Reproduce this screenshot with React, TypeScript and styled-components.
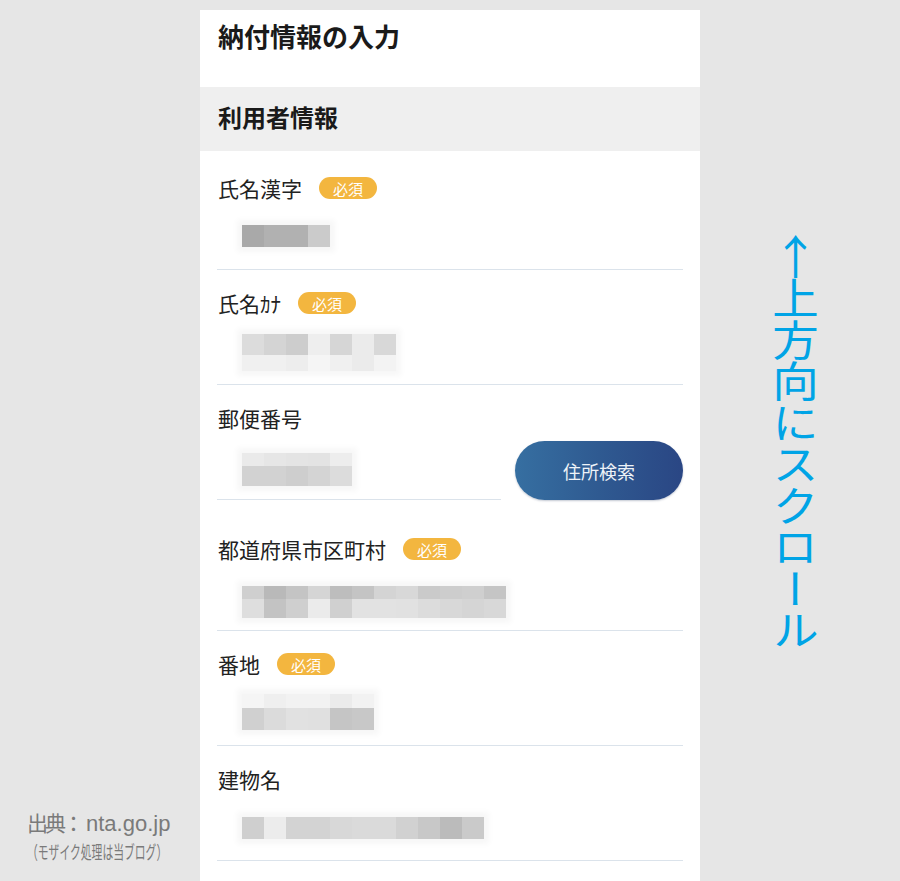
import React from "react";
import styled, { createGlobalStyle } from "styled-components";

const GlobalStyle = createGlobalStyle`
  html, body { margin: 0; padding: 0; background: #e6e6e6; }
  body { font-family: "Noto Sans CJK JP", "Noto Sans", sans-serif; }
`;

const Page = styled.div`
  width: 900px;
  height: 881px;
  overflow: hidden;
  display: grid;
  grid-template-columns: 200px 500px 200px;
  background: #e6e6e6;
`;

const LeftCol = styled.aside`
  display: flex;
  flex-direction: column;
  justify-content: flex-end;
  padding: 0 0 17px 27px;
  color: #7a7a7a;
`;

const CreditMain = styled.div`
  font-family: "Liberation Sans", "Noto Sans CJK JP", sans-serif;
  font-size: 22px;
  line-height: 28px;
  white-space: nowrap;
`;

const CreditCjk = styled.span`
  font-family: "Noto Sans CJK JP", sans-serif;
  font-size: 21px;
  letter-spacing: -3px;
  margin-right: 5px;
`;

const CreditNote = styled.div`
  display: inline-block;
  font-size: 18px;
  line-height: 22px;
  white-space: nowrap;
  margin-top: 2px;
  transform: scaleX(0.6);
  transform-origin: left center;
`;

const Panel = styled.main`
  margin-top: 10px;
  background: #ffffff;
  display: flex;
  flex-direction: column;
`;

const TitleBar = styled.header`
  height: 77px;
  box-sizing: border-box;
  padding: 8px 18px 0;
`;

const Title = styled.h1`
  margin: 0;
  font-size: 26px;
  line-height: 36px;
  font-weight: 700;
  color: #1a1a1a;
`;

const SectionBand = styled.div`
  height: 64px;
  box-sizing: border-box;
  background: #efefef;
  display: flex;
  align-items: center;
  padding: 0 18px 5px;
`;

const SectionTitle = styled.h2`
  margin: 0;
  font-size: 24px;
  font-weight: 700;
  color: #1a1a1a;
`;

const Form = styled.div`
  display: flex;
  flex-direction: column;
  padding: 4px 17px 0 17px;
`;

const Field = styled.section<{ $extra?: number }>`
  padding-top: 20px;
  margin-bottom: ${(p) => p.$extra ?? 0}px;
`;

const LabelRow = styled.div`
  display: flex;
  align-items: center;
  height: 26px;
  gap: 17px;
  padding-left: 1px;
`;

const Label = styled.span`
  font-size: 21px;
  color: #222;
  white-space: nowrap;
`;

const Badge = styled.span`
  display: inline-flex;
  align-items: center;
  height: 22px;
  padding: 0 14px;
  border-radius: 11px;
  background: #f3b63f;
  color: #fff;
  font-size: 15px;
  line-height: 1;
`;

const InputRow = styled.div`
  display: flex;
  align-items: flex-end;
  gap: 14px;
`;

const InputLine = styled.div<{ $pad: number }>`
  flex: 1;
  height: 69px;
  box-sizing: border-box;
  border-bottom: 1px solid #dbe3eb;
  display: flex;
  align-items: flex-end;
  padding: 0 0 ${(p) => p.$pad}px 25px;
`;

const SearchButton = styled.button`
  flex: none;
  width: 168px;
  height: 59px;
  border: none;
  border-radius: 30px;
  background: linear-gradient(90deg, #366fa1 0%, #2f5a91 50%, #2a4684 100%);
  box-shadow: 0 1px 2px rgba(20, 40, 80, 0.25);
  color: #eef3f8;
  font-family: "Noto Sans CJK JP", sans-serif;
  font-size: 18px;
`;

const Mosaic = styled.div`
  display: flex;
  flex-direction: column;
  box-shadow: 0 0 6px 5px #f7f7f7;
  background: #f7f7f7;
`;

const MosaicRow = styled.div<{ $h: number }>`
  display: flex;
  height: ${(p) => p.$h}px;
`;

const Cell = styled.div<{ $c: string }>`
  width: 22px;
  height: 100%;
  background: ${(p) => p.$c};
`;

const RightCol = styled.aside`
  padding: 236px 0 0 74px;
`;

const Vertical = styled.div`
  writing-mode: vertical-rl;
  text-orientation: mixed;
  font-family: "Noto Sans CJK JP", sans-serif;
  font-size: 41.5px;
  line-height: 1;
  font-weight: 400;
  color: #00a4e6;
  transform: scaleX(1.12);
  transform-origin: center top;
  white-space: nowrap;
`;

const Upright = styled.span`
  text-orientation: upright;
  display: inline-block;
  transform: scaleY(1.12);
`;

type Row = { h: number; cells: string[] };
type FieldDef = {
  label: string;
  required: boolean;
  pad: number;
  rows: Row[];
  search?: boolean;
  extra?: number;
};

const fields: FieldDef[] = [
  {
    label: "氏名漢字",
    required: true,
    pad: 22,
    rows: [{ h: 22, cells: ["#a9a9a9", "#b1b1b1", "#b1b1b1", "#cbcbcb"] }],
  },
  {
    label: "氏名ｶﾅ",
    required: true,
    pad: 13,
    rows: [
      { h: 21, cells: ["#dcdcdc", "#d4d4d4", "#cdcdcd", "#eeeeee", "#d6d6d6", "#ebebeb", "#d8d8d8"] },
      { h: 16, cells: ["#f0f0f0", "#f0f0f0", "#ededed", "#f5f5f5", "#f0f0f0", "#ebebeb", "#f3f3f3"] },
    ],
  },
  {
    label: "郵便番号",
    required: false,
    pad: 13,
    search: true,
    extra: 16,
    rows: [
      { h: 13, cells: ["#eaeaea", "#e6e6e6", "#e4e4e4", "#e3e3e3", "#ededed"] },
      { h: 20, cells: ["#d2d2d2", "#d2d2d2", "#cecece", "#d4d4d4", "#dcdcdc"] },
    ],
  },
  {
    label: "都道府県市区町村",
    required: true,
    pad: 12,
    rows: [
      {
        h: 13,
        cells: ["#cfcfcf", "#b9b9b9", "#c4c4c4", "#d5d5d5", "#bdbdbd", "#c4c4c4", "#d4d4d4", "#d8d8d8", "#cacaca", "#cdcdcd", "#cfcfcf", "#c5c5c5"],
      },
      {
        h: 19,
        cells: ["#dedede", "#c3c3c3", "#cfcfcf", "#ebebeb", "#d0d0d0", "#e2e2e2", "#e2e2e2", "#e1e1e1", "#dcdcdc", "#d8d8d8", "#d5d5d5", "#d8d8d8"],
      },
    ],
  },
  {
    label: "番地",
    required: true,
    pad: 15,
    rows: [
      { h: 14, cells: ["#f5f5f5", "#efefef", "#f2f2f2", "#f2f2f2", "#ebebeb", "#f2f2f2"] },
      { h: 22, cells: ["#d0d0d0", "#dbdbdb", "#e1e1e1", "#e0e0e0", "#c5c5c5", "#c8c8c8"] },
    ],
  },
  {
    label: "建物名",
    required: false,
    pad: 21,
    rows: [
      {
        h: 22,
        cells: ["#cfcfcf", "#ececec", "#d3d3d3", "#d3d3d3", "#d8d8d8", "#dadada", "#dadada", "#d1d1d1", "#c8c8c8", "#bbbbbb", "#cacaca"],
      },
    ],
  },
];

export default function App() {
  return (
    <>
      <GlobalStyle />
      <Page>
        <LeftCol>
          <CreditMain>
            <CreditCjk>出典：</CreditCjk>nta.go.jp
          </CreditMain>
          <div>
            <CreditNote>（モザイク処理は当ブログ）</CreditNote>
          </div>
        </LeftCol>

        <Panel>
          <TitleBar>
            <Title>納付情報の入力</Title>
          </TitleBar>
          <SectionBand>
            <SectionTitle>利用者情報</SectionTitle>
          </SectionBand>
          <Form>
            {fields.map((f) => (
              <Field key={f.label} $extra={f.extra}>
                <LabelRow>
                  <Label>{f.label}</Label>
                  {f.required && <Badge>必須</Badge>}
                </LabelRow>
                <InputRow>
                  <InputLine $pad={f.pad}>
                    <Mosaic>
                      {f.rows.map((r, i) => (
                        <MosaicRow key={i} $h={r.h}>
                          {r.cells.map((c, j) => (
                            <Cell key={j} $c={c} />
                          ))}
                        </MosaicRow>
                      ))}
                    </Mosaic>
                  </InputLine>
                  {f.search && <SearchButton type="button">住所検索</SearchButton>}
                </InputRow>
              </Field>
            ))}
          </Form>
        </Panel>

        <RightCol>
          <Vertical>
            <Upright>↑</Upright>上方向にスクロール
          </Vertical>
        </RightCol>
      </Page>
    </>
  );
}
